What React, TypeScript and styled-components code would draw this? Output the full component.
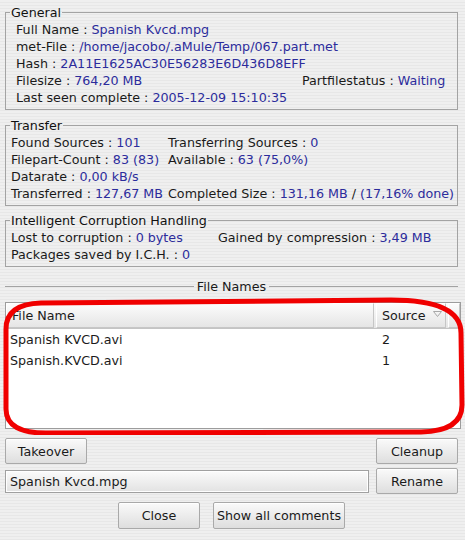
import React, { ReactElement } from 'react';
import styled, { createGlobalStyle } from 'styled-components';

const GlobalStyle = createGlobalStyle`
  html, body {
    margin: 0;
    padding: 0;
  }
  body {
    width: 465px;
    height: 540px;
    overflow: hidden;
    font-family: 'DejaVu Sans', 'Liberation Sans', sans-serif;
    font-size: 12.7px;
    color: #1a1a1a;
    background: repeating-linear-gradient(
      to bottom,
      #efefef 0px,
      #efefef 2px,
      #e7e7e7 2px,
      #e7e7e7 3px
    );
  }
`;

const StyledDialog = styled.div`
  display: flex;
  flex-direction: column;
  padding: 4px 7px 0 5px;
`;

const StyledGroup = styled.fieldset<{ $top: number }>`
  margin: ${(p) => p.$top}px 0 0 0;
  padding: 0 4px 3px 4px;
  border: 1px solid #a3a3a3;
  min-inline-size: 0;
`;

const StyledLegend = styled.legend`
  padding: 0 1px;
  margin-left: 0;
  line-height: 17px;
  color: #111;
`;

const StyledGrid = styled.div<{ $cols: string; $indent: number }>`
  display: grid;
  grid-template-columns: ${(p) => p.$cols};
  column-gap: 5px;
  padding-left: ${(p) => p.$indent}px;
  margin-left: -4px;
`;

const StyledCell = styled.div<{ $span?: boolean }>`
  line-height: 17px;
  white-space: nowrap;
  grid-column: ${(p) => (p.$span ? '1 / -1' : 'auto')};
`;

const StyledValue = styled.span`
  color: #2c2c9c;
`;

const StyledSeparator = styled.div`
  display: flex;
  align-items: center;
  gap: 3px;
  margin-top: 11px;
  line-height: 17px;
  &::before,
  &::after {
    content: '';
    flex: 1;
    height: 1px;
    background: #a3a3a3;
  }
`;

const StyledListWrap = styled.div`
  position: relative;
  margin: 7px -3px 0 0;
`;

const StyledList = styled.div`
  height: 125px;
  border: 1px solid #9c9c9c;
  background: #ffffff;
  display: flex;
  flex-direction: column;
`;

const StyledHeader = styled.div`
  display: flex;
  height: 25px;
  border-bottom: 1px solid #c4c4c4;
  background: linear-gradient(#fdfdfd, #e4e4e4);
`;

const StyledHeadCell = styled.div<{ $width: number | string }>`
  position: relative;
  flex: ${(p) => (typeof p.$width === 'number' ? `0 0 ${p.$width}px` : '1')};
  display: flex;
  align-items: center;
  padding-left: 5px;
  border: 1px solid #c6c6c6;
  border-top-color: #ffffff;
  border-left-color: #ffffff;
  box-sizing: border-box;
  margin-right: 2px;
  &:last-child {
    margin-right: 0;
  }
`;

const StyledSortArrow = styled.svg`
  position: absolute;
  right: 3px;
  top: 7px;
`;

const StyledRow = styled.div`
  display: flex;
  height: 21px;
  align-items: center;
`;

const StyledRowCell = styled.div<{ $width?: number }>`
  flex: ${(p) => (p.$width ? `0 0 ${p.$width}px` : '1')};
  padding-left: ${(p) => (p.$width ? 6 : 4)}px;
  box-sizing: border-box;
`;

const StyledMark = styled.svg`
  position: absolute;
  left: -4px;
  top: -5px;
  pointer-events: none;
`;

const StyledButtonRow = styled.div<{ $top: number; $center?: boolean }>`
  display: flex;
  align-items: center;
  justify-content: ${(p) => (p.$center ? 'center' : 'space-between')};
  gap: ${(p) => (p.$center ? 13 : 7)}px;
  margin-top: ${(p) => p.$top}px;
`;

const StyledButton = styled.button<{ $width: number; $height?: number }>`
  width: ${(p) => p.$width}px;
  height: ${(p) => p.$height ?? 26}px;
  margin: 0;
  padding: 0;
  font-family: inherit;
  font-size: 12.7px;
  color: #1a1a1a;
  border: 1px solid #a9a9a9;
  border-radius: 2px;
  background: linear-gradient(#fafafa, #dedede);
  box-shadow: inset 0 1px 0 #ffffff;
`;

const StyledInput = styled.input`
  flex: 1;
  height: 23px;
  box-sizing: border-box;
  margin: 0;
  padding: 0 4px;
  font-family: inherit;
  font-size: 12.7px;
  color: #1a1a1a;
  border: 1px solid #a0a0a0;
  box-shadow: inset 0 0 0 1px #ffffff;
  background: linear-gradient(#fbfbfb, #e2e2e2);
  outline: none;
`;

const Field = ({ label, value }: { label: string; value: string }): ReactElement => (
  <>
    {label} : <StyledValue>{value}</StyledValue>
  </>
);

const App = (): ReactElement => {
  const files = [
    { name: 'Spanish KVCD.avi', sources: 2 },
    { name: 'Spanish.KVCD.avi', sources: 1 },
  ];

  return (
    <StyledDialog>
      <GlobalStyle />
      <StyledGroup $top={0}>
        <StyledLegend>General</StyledLegend>
        <StyledGrid $cols="281px 1fr" $indent={10}>
          <StyledCell $span>
            <Field label="Full Name" value="Spanish Kvcd.mpg" />
          </StyledCell>
          <StyledCell $span>
            <Field label="met-File" value="/home/jacobo/.aMule/Temp/067.part.met" />
          </StyledCell>
          <StyledCell $span>
            <Field label="Hash" value="2A11E1625AC30E56283E6D436D8EFF" />
          </StyledCell>
          <StyledCell>
            <Field label="Filesize" value="764,20 MB" />
          </StyledCell>
          <StyledCell>
            <Field label="Partfilestatus" value="Waiting" />
          </StyledCell>
          <StyledCell $span>
            <Field label="Last seen complete" value="2005-12-09 15:10:35" />
          </StyledCell>
        </StyledGrid>
      </StyledGroup>

      <StyledGroup $top={7}>
        <StyledLegend>Transfer</StyledLegend>
        <StyledGrid $cols="auto 1fr" $indent={5}>
          <StyledCell>
            <Field label="Found Sources" value="101" />
          </StyledCell>
          <StyledCell>
            <Field label="Transferring Sources" value="0" />
          </StyledCell>
          <StyledCell>
            <Field label="Filepart-Count" value="83 (83)" />
          </StyledCell>
          <StyledCell>
            <Field label="Available" value="63 (75,0%)" />
          </StyledCell>
          <StyledCell $span>
            <Field label="Datarate" value="0,00 kB/s" />
          </StyledCell>
          <StyledCell>
            <Field label="Transferred" value="127,67 MB" />
          </StyledCell>
          <StyledCell>
            <Field label="Completed Size" value="131,16 MB" /> / <StyledValue>(17,16% done)</StyledValue>
          </StyledCell>
        </StyledGrid>
      </StyledGroup>

      <StyledGroup $top={6}>
        <StyledLegend>Intelligent Corruption Handling</StyledLegend>
        <StyledGrid $cols="202px 1fr" $indent={5}>
          <StyledCell>
            <Field label="Lost to corruption" value="0 bytes" />
          </StyledCell>
          <StyledCell>
            <Field label="Gained by compression" value="3,49 MB" />
          </StyledCell>
          <StyledCell $span>
            <Field label="Packages saved by I.C.H." value="0" />
          </StyledCell>
        </StyledGrid>
      </StyledGroup>

      <StyledSeparator>File Names</StyledSeparator>

      <StyledListWrap>
        <StyledList>
          <StyledHeader>
            <StyledHeadCell $width="auto">File Name</StyledHeadCell>
            <StyledHeadCell $width={70}>
              Source
              <StyledSortArrow width="9" height="6" viewBox="0 0 9 6">
                <path d="M0.5 0.5 L8.5 0.5 L4.5 5.5 Z" fill="none" stroke="#a8a8a8" strokeWidth="1" />
              </StyledSortArrow>
            </StyledHeadCell>
            <StyledHeadCell $width={12} />
          </StyledHeader>
          {files.map((f) => (
            <StyledRow key={f.name}>
              <StyledRowCell>{f.name}</StyledRowCell>
              <StyledRowCell $width={84}>{f.sources}</StyledRowCell>
            </StyledRow>
          ))}
        </StyledList>
        <StyledMark width="464" height="138" viewBox="0 0 464 138">
          <path
            d="M40 6 L390 3 Q460 3 460 36 L461 108 Q461 134 420 135 L48 136 Q5 137 5 112 L5 32 Q5 7 40 6 Z"
            fill="none"
            stroke="#f00000"
            strokeWidth="5"
          />
        </StyledMark>
      </StyledListWrap>

      <StyledButtonRow $top={9}>
        <StyledButton $width={82}>Takeover</StyledButton>
        <StyledButton $width={82}>Cleanup</StyledButton>
      </StyledButtonRow>

      <StyledButtonRow $top={4}>
        <StyledInput defaultValue="Spanish Kvcd.mpg" />
        <StyledButton $width={82}>Rename</StyledButton>
      </StyledButtonRow>

      <StyledButtonRow $top={8} $center>
        <StyledButton $width={82} $height={27}>Close</StyledButton>
        <StyledButton $width={132} $height={27}>Show all comments</StyledButton>
      </StyledButtonRow>
    </StyledDialog>
  );
};

export default App;
